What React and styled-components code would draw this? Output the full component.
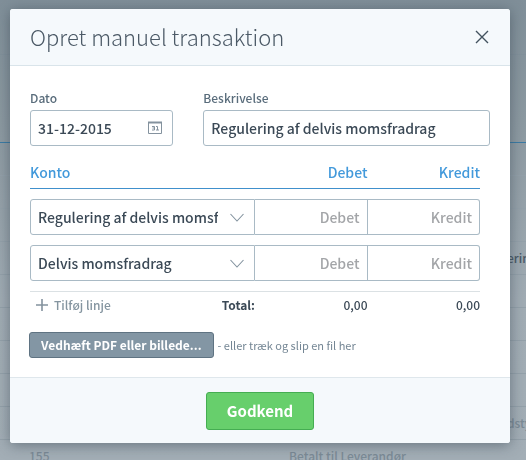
import React, { useState } from 'react'
import styled, { createGlobalStyle } from 'styled-components'

const GlobalStyle = createGlobalStyle`
    * {
        box-sizing: border-box;
    }

    body {
        margin: 0;
        background: #8f9ba3;
        color: #3b4956;
        font-family: "Noto Sans CJK SC", "Noto Sans", sans-serif;
        font-size: 14px;
        font-weight: 500;
        line-height: 20px;
    }

    input, select, button {
        font: inherit;
        color: inherit;
    }
`

const Backdrop = styled.div`
    position: fixed;
    inset: 0;
    overflow: hidden;
    background: linear-gradient(#808f99 0, #8c99a1 120px, #a1acb4 300px, #a3aeb6 100%);
`

const Toolbar = styled.div`
    height: 55px;
    border-bottom: 1px solid #82919b;
`

const Ledger = styled.table`
    width: 100%;
    table-layout: fixed;
    border-spacing: 0;
    white-space: nowrap;
    font-size: 12px;

    th {
        height: 88px;
        padding: 0;
        border-bottom: 1px solid #3a7ba5;
    }

    td {
        height: 33px;
        padding: 0;
        border-bottom: 1px solid #94a1aa;
        color: #7c8b96;
    }

    th:first-child {
        width: 29px;
    }

    th:nth-child(2) {
        width: 260px;
    }

    th:last-child {
        width: 19px;
    }
`

const Dark = styled.span`
    color: #4a5965;
`

const Page = styled.main`
    position: relative;
    padding: 9px 16px 17px 10px;
`

const Modal = styled.section`
    max-width: 640px;
    margin: 0 auto;
    border-radius: 3px;
    background: #fff;
    box-shadow: 0 2px 14px rgba(45, 60, 72, 0.5);
`

const Header = styled.header`
    display: flex;
    align-items: center;
    justify-content: space-between;
    height: 57px;
    padding: 0 20px;
    border-bottom: 1px solid #d9e4ea;
    border-radius: 3px 3px 0 0;
    background: #f5f9fc;
`

const Title = styled.h1`
    margin: 0 0 2px;
    font-size: 22px;
    font-weight: 300;
    line-height: 32px;
    color: #4b5966;
`

const CloseButton = styled.button`
    display: flex;
    padding: 0;
    border: 0;
    background: none;
    cursor: pointer;
`

const Body = styled.div`
    padding: 22px 20px 19px;
`

const Fields = styled.div`
    display: grid;
    grid-template-columns: minmax(0, 1fr) minmax(0, 2fr);
    gap: 30px;
`

const Label = styled.label`
    display: block;
    margin-bottom: 2px;
    font-size: 12px;
    color: #596c7b;
`

const InputBox = styled.div`
    display: flex;
    align-items: center;
    height: 36px;
    padding-right: ${props => (props.$icon ? '10px' : '0')};
    border: 1px solid #a9bac5;
    border-radius: 3px;
    background: #fff;
`

const TextInput = styled.input`
    flex: 1;
    min-width: 0;
    height: 34px;
    padding: 0 7px;
    border: 0;
    background: none;
    outline: none;
    text-align: ${props => (props.$right ? 'right' : 'left')};

    &::placeholder {
        color: #a3a5a8;
        opacity: 1;
    }
`

const Lines = styled.table`
    width: calc(100% - 10px);
    margin-top: 16px;
    table-layout: fixed;
    border-spacing: 0;
`

const HeadCell = styled.th`
    width: ${props => props.$width || 'auto'};
    height: 27px;
    padding: 0 0 6px;
    border-bottom: 1px solid #4090cc;
    font-weight: 500;
    color: #4299db;
    text-align: ${props => (props.$right ? 'right' : 'left')};
`

const LineCell = styled.td`
    padding: 10px 0 0;
`

const LineBox = styled.div`
    position: relative;
    height: 36px;
    border: 1px solid #a9bac5;
    border-left-width: ${props => (props.$first ? '1px' : '0')};
    border-radius: ${props => (props.$first ? '3px 0 0 3px' : props.$last ? '0 3px 3px 0' : '0')};

    input {
        width: 100%;
    }
`

const Select = styled.select`
    appearance: none;
    width: 100%;
    height: 34px;
    padding: 0 36px 0 7px;
    border: 0;
    background: none;
    outline: none;
`

const Arrow = styled.svg`
    position: absolute;
    top: 13px;
    right: 10px;
    pointer-events: none;
`

const TotalCell = styled.td`
    height: 27px;
    padding: 0;
    border-top: 1px solid #dbe1e4;
    font-size: 12px;
    text-align: right;
`

const Spacer = styled.td`
    height: 10px;
    padding: 0;
`

const TotalRow = styled.div`
    display: flex;
    align-items: center;
    justify-content: space-between;
    padding-left: 6px;
`

const AddButton = styled.button`
    display: flex;
    align-items: center;
    gap: 6px;
    padding: 0;
    border: 0;
    background: none;
    color: #8595a0;
    cursor: pointer;
`

const Attach = styled.div`
    display: flex;
    align-items: center;
    gap: 4px;
    margin: 14px 0 0 -1px;
    font-size: 11px;
    font-weight: 400;
    color: #748694;
`

const AttachButton = styled.button`
    height: 26px;
    padding: 0 11px;
    border: 1px solid #5f7382;
    border-radius: 3px;
    background: #8396a4;
    color: #fff;
    font-size: 12px;
    font-weight: 700;
    line-height: 24px;
    white-space: nowrap;
    cursor: pointer;
`

const Footer = styled.footer`
    display: flex;
    justify-content: center;
    padding: 14px 20px 13px;
    border-top: 1px solid #dfe7ec;
    border-radius: 0 0 3px 3px;
    background: #f5f9fc;
`

const ApproveButton = styled.button`
    height: 38px;
    padding: 0 20px;
    border: 1px solid #45ad52;
    border-radius: 3px;
    background: #67cf6c;
    color: #fff;
    font-size: 15px;
    font-weight: 700;
    line-height: 36px;
    cursor: pointer;
`

const CalendarIcon = () => (
    <svg width="14" height="14" viewBox="0 0 14 14" fill="none" stroke="#84929e">
        <path d="M.5 1.5h13v11H.5z" />
        <path d="M0 1.5h14" strokeWidth="2" />
        <path d="M4 5.5h2.5v3.500H4M4.500 7h2M8 5.500h1.500v3.500M8 9h3" strokeWidth="1" />
    </svg>
)

const CloseIcon = () => (
    <svg width="16" height="16" viewBox="0 0 16 16" fill="none" stroke="#43525f" strokeWidth="1.4">
        <path d="M2 2l12 12M14 2L2 14" />
    </svg>
)

const PlusIcon = () => (
    <svg width="12" height="12" viewBox="0 0 12 12" fill="none" stroke="#84929e" strokeWidth="1.6">
        <path d="M6 0v12M0 6h12" />
    </svg>
)

const ArrowIcon = () => (
    <Arrow width="14" height="9" viewBox="0 0 14 9" fill="none" stroke="#82929e" strokeWidth="1.1">
        <path d="M.5 1L7 8l6.500-7" />
    </Arrow>
)

const ledgerRows = [
    {},
    {},
    {},
    { note: <Dark>ering</Dark> },
    {},
    {},
    {},
    {},
    { note: 'dstyr' },
    { number: '155', text: 'Betalt til Leverandør' },
]

const Background = () => (
    <Backdrop aria-hidden="true">
        <Toolbar />
        <Ledger>
            <thead>
                <tr>
                    <th />
                    <th />
                    <th />
                    <th />
                </tr>
            </thead>
            <tbody>
                {ledgerRows.map((row, i) => (
                    <tr key={i}>
                        <td />
                        <td>{row.number}</td>
                        <td>{row.text}</td>
                        <td>{row.note}</td>
                    </tr>
                ))}
            </tbody>
        </Ledger>
    </Backdrop>
)

const accounts = ['Regulering af delvis momsfradrag', 'Delvis momsfradrag']

const Line = ({ account }) => (
    <tr>
        <LineCell>
            <LineBox $first>
                <Select aria-label="Konto" defaultValue={account}>
                    {accounts.map(name => (
                        <option key={name}>{name}</option>
                    ))}
                </Select>
                <ArrowIcon />
            </LineBox>
        </LineCell>
        <LineCell>
            <LineBox>
                <TextInput $right aria-label="Debet" placeholder="Debet" />
            </LineBox>
        </LineCell>
        <LineCell>
            <LineBox $last>
                <TextInput $right aria-label="Kredit" placeholder="Kredit" />
            </LineBox>
        </LineCell>
    </tr>
)

const App = () => {
    const [lines, setLines] = useState(accounts)

    return (
        <React.Fragment>
            <GlobalStyle />
            <Background />
            <Page>
                <Modal role="dialog" aria-labelledby="title">
                    <Header>
                        <Title id="title">Opret manuel transaktion</Title>
                        <CloseButton type="button" aria-label="Luk">
                            <CloseIcon />
                        </CloseButton>
                    </Header>
                    <Body>
                        <Fields>
                            <div>
                                <Label htmlFor="date">Dato</Label>
                                <InputBox $icon>
                                    <TextInput id="date" defaultValue="31-12-2015" />
                                    <CalendarIcon />
                                </InputBox>
                            </div>
                            <div>
                                <Label htmlFor="description">Beskrivelse</Label>
                                <InputBox>
                                    <TextInput id="description" defaultValue="Regulering af delvis momsfradrag" />
                                </InputBox>
                            </div>
                        </Fields>
                        <Lines>
                            <thead>
                                <tr>
                                    <HeadCell>Konto</HeadCell>
                                    <HeadCell $right $width="25%">Debet</HeadCell>
                                    <HeadCell $right $width="25%">Kredit</HeadCell>
                                </tr>
                            </thead>
                            <tbody>
                                {lines.map((account, i) => (
                                    <Line key={i} account={account} />
                                ))}
                                <tr>
                                    <Spacer colSpan="3" />
                                </tr>
                            </tbody>
                            <tfoot>
                                <tr>
                                    <TotalCell>
                                        <TotalRow>
                                            <AddButton type="button" onClick={() => setLines([...lines, accounts[0]])}>
                                                <PlusIcon />
                                                Tilføj linje
                                            </AddButton>
                                            <b>Total:</b>
                                        </TotalRow>
                                    </TotalCell>
                                    <TotalCell>0,00</TotalCell>
                                    <TotalCell>0,00</TotalCell>
                                </tr>
                            </tfoot>
                        </Lines>
                        <Attach>
                            <AttachButton type="button">Vedhæft PDF eller billede...</AttachButton>
                            <span>- eller træk og slip en fil her</span>
                        </Attach>
                    </Body>
                    <Footer>
                        <ApproveButton type="submit">Godkend</ApproveButton>
                    </Footer>
                </Modal>
            </Page>
        </React.Fragment>
    )
}

export default App
